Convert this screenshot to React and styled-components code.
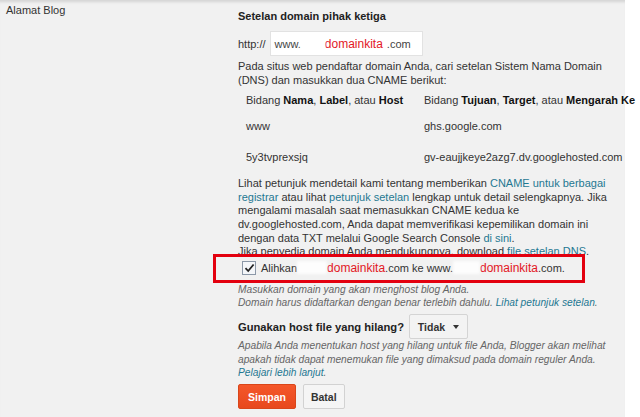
import React from "react";
import styled, { createGlobalStyle } from "styled-components";

const GlobalStyle = createGlobalStyle`
  html, body {
    margin: 0;
    padding: 0;
    background: #ffffff;
  }
  body {
    font-family: "Liberation Sans", Arial, sans-serif;
    font-size: 11px;
    color: #222;
  }
`;

const Panel = styled.div`
  width: 625px;
  height: 417px;
  background: #f1f1f1;
  display: grid;
  grid-template-columns: 238px 1fr;
  box-shadow: inset 0 4px 3px -2px rgba(0, 0, 0, 0.12);
`;

const Label = styled.div`
  padding: 3px 0 0 6px;
  line-height: 14px;
  color: #333;
`;

const Content = styled.div`
  padding-top: 9px;
  white-space: nowrap;
`;

const Title = styled.div`
  font-weight: bold;
  font-size: ${({ $size }) => $size || 11}px;
  line-height: 14px;
  color: #222;
`;

const UrlRow = styled.div`
  display: flex;
  align-items: center;
  gap: 4px;
  margin-top: 8px;
  color: #333;
`;

const TextInput = styled.div`
  width: 153px;
  height: 25px;
  box-sizing: border-box;
  background: #fff;
  border: 1px solid #e2e2e2;
  display: flex;
  align-items: center;
  padding-left: 4px;
  color: #444;
`;

const Blur = styled.span`
  display: inline-block;
  flex-shrink: 0;
  width: ${({ $w }) => $w}px;
  height: 13px;
  background: ${({ $light }) => ($light ? "rgba(255,255,255,0.85)" : "#fff")};
  filter: blur(1.5px);
  vertical-align: middle;
`;

const Red = styled.span`
  color: #e3171f;
  font-size: 12px;
`;

const Para = styled.p`
  margin: ${({ $m }) => $m || "0"};
  line-height: 13.6px;
  color: #333;
`;

const Hint = styled.p`
  margin: ${({ $m }) => $m || "0"};
  line-height: 13.3px;
  font-size: 10.2px;
  font-style: italic;
  color: #666;
`;

const Link = styled.a`
  color: #1f7891;
  text-decoration: none;
`;

const DnsTable = styled.div`
  display: grid;
  grid-template-columns: 178px auto;
  grid-template-rows: 14px 14px 14px;
  margin: 6px 0 0 8px;
  color: #333;
  line-height: 14px;
`;

const Cell = styled.div`
  margin-top: ${({ $top }) => $top || 0}px;
  b {
    color: #111;
  }
`;

const CheckRow = styled.div`
  position: relative;
  display: flex;
  align-items: center;
  height: 16px;
  margin-top: 1px;
  padding-left: 4px;
  color: #333;
`;

const Highlight = styled.div`
  position: absolute;
  left: -25px;
  top: -6px;
  width: 372px;
  height: 29px;
  box-sizing: border-box;
  border: 3px solid #e3000f;
  pointer-events: none;
`;

const Box = styled.span`
  width: 14px;
  height: 14px;
  box-sizing: border-box;
  border: 1px solid #8c98a8;
  background: #f4f6f9;
  display: inline-flex;
  align-items: center;
  justify-content: center;
  margin-right: 5px;
`;

const HostRow = styled.div`
  display: flex;
  align-items: center;
  gap: 5px;
  margin-top: 5px;
`;

const Dropdown = styled.div`
  width: 59px;
  height: 25px;
  box-sizing: border-box;
  border: 1px solid #d4d4d4;
  border-radius: 2px;
  background: #f3f3f3;
  display: flex;
  align-items: center;
  justify-content: center;
  gap: 8px;
  font-weight: bold;
  font-size: 10.5px;
  color: #333;
`;

const Caret = styled.span`
  width: 0;
  height: 0;
  border-left: 3.5px solid transparent;
  border-right: 3.5px solid transparent;
  border-top: 4px solid #333;
`;

const Actions = styled.div`
  display: flex;
  gap: 7px;
  margin-top: 5px;
`;

const Button = styled.div`
  height: 25px;
  box-sizing: border-box;
  padding: 0 ${({ $primary }) => ($primary ? 9 : 7)}px;
  display: flex;
  align-items: center;
  border-radius: 2px;
  font-weight: bold;
  font-size: 10.5px;
  border: 1px solid ${({ $primary }) => ($primary ? "#d9461a" : "#d2d2d2")};
  background: ${({ $primary }) =>
    $primary ? "linear-gradient(#f4572a, #e8481d)" : "#f5f5f5"};
  color: ${({ $primary }) => ($primary ? "#fff" : "#333")};
`;

export default function App() {
  return (
    <>
      <GlobalStyle />
      <Panel>
        <Label>Alamat Blog</Label>
        <Content>
          <Title>Setelan domain pihak ketiga</Title>
          <UrlRow>
            <span>http://</span>
            <TextInput>
              www.
              <Blur $w={24} />
              <Red>domainkita</Red>
              <span style={{ marginLeft: 4 }}>.com</span>
            </TextInput>
          </UrlRow>
          <Para $m="4px 0 0">
            Pada situs web pendaftar domain Anda, cari setelan Sistem Nama Domain
            <br />
            (DNS) dan masukkan dua CNAME berikut:
          </Para>
          <DnsTable>
            <Cell>
              Bidang <b>Nama</b>, <b>Label</b>, atau <b>Host</b>
            </Cell>
            <Cell>
              Bidang <b>Tujuan</b>, <b>Target</b>, atau <b>Mengarah Ke</b>
            </Cell>
            <Cell $top={12}>www</Cell>
            <Cell $top={12}>ghs.google.com</Cell>
            <Cell $top={29}>5y3tvprexsjq</Cell>
            <Cell $top={29}>gv-eaujjkeye2azg7.dv.googlehosted.com</Cell>
          </DnsTable>
          <Para $m="42px 0 0">
            Lihat petunjuk mendetail kami tentang memberikan{" "}
            <Link>CNAME untuk berbagai</Link>
            <br />
            <Link>registrar</Link> atau lihat <Link>petunjuk setelan</Link> lengkap untuk detail selengkapnya. Jika
            <br />
            mengalami masalah saat memasukkan CNAME kedua ke
            <br />
            dv.googlehosted.com, Anda dapat memverifikasi kepemilikan domain ini
            <br />
            dengan data TXT melalui Google Search Console <Link>di sini</Link>.
            <br />
            Jika penyedia domain Anda mendukungnya, download <Link>file setelan DNS</Link>.
          </Para>
          <CheckRow>
            <Highlight />
            <Box>
              <svg width="11" height="10" viewBox="0 0 11 10">
                <path d="M1.5 5.2 L4.2 8 L9.6 1.5" fill="none" stroke="#222" strokeWidth="1.8" />
              </svg>
            </Box>
            Alihkan
            <Blur $w={30} $light />
            <Red>domainkita</Red>.com ke www.
            <Blur $w={27} $light />
            <Red>domainkita</Red>.com.
          </CheckRow>
          <Hint $m="7px 0 0">
            Masukkan domain yang akan menghost blog Anda.
            <br />
            Domain harus didaftarkan dengan benar terlebih dahulu. <Link>Lihat petunjuk setelan</Link>.
          </Hint>
          <HostRow>
            <Title $size={11.2}>Gunakan host file yang hilang?</Title>
            <Dropdown>
              Tidak
              <Caret />
            </Dropdown>
          </HostRow>
          <Hint>
            Apabila Anda menentukan host yang hilang untuk file Anda, Blogger akan melihat
            <br />
            apakah tidak dapat menemukan file yang dimaksud pada domain reguler Anda.
            <br />
            <Link>Pelajari lebih lanjut</Link>.
          </Hint>
          <Actions>
            <Button $primary>Simpan</Button>
            <Button>Batal</Button>
          </Actions>
        </Content>
      </Panel>
    </>
  );
}
